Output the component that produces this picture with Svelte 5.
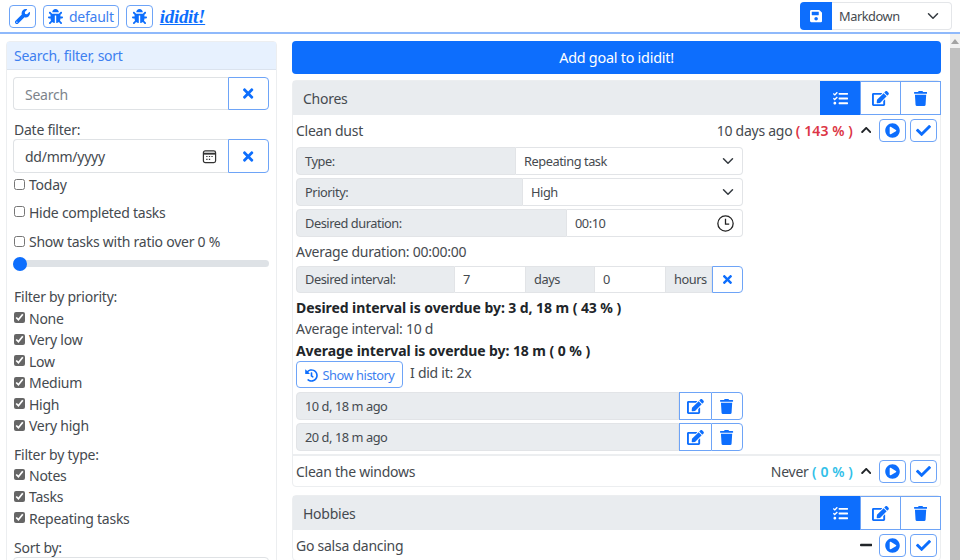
<script>
  const P = {
    wrench: [512, "M507.73 109.1c-2.24-9.03-13.54-12.09-20.12-5.51l-74.36 74.36-67.88-11.31-11.31-67.88 74.36-74.36c6.62-6.62 3.43-17.9-5.66-20.16-47.38-11.74-99.55.91-136.58 37.93-39.64 39.64-50.55 97.1-34.05 147.2L18.74 402.76c-24.99 24.99-24.99 65.51 0 90.5 24.99 24.99 65.51 24.99 90.5 0l213.21-213.21c50.12 16.71 107.47 5.68 147.37-34.22 37.07-37.07 49.7-89.32 37.91-136.73zM64 472c-13.25 0-24-10.75-24-24 0-13.26 10.75-24 24-24s24 10.74 24 24c0 13.25-10.75 24-24 24z"],
    bug: [512, "M511.988 288.9c-.478 17.43-15.217 31.1-32.653 31.1H424v16c0 21.864-4.882 42.584-13.6 61.145l60.228 60.228c12.496 12.497 12.496 32.758 0 45.255-12.498 12.497-32.759 12.496-45.256 0l-54.736-54.736C345.886 467.965 314.351 480 280 480V236c0-6.627-5.373-12-12-12h-24c-6.627 0-12 5.373-12 12v244c-34.351 0-65.886-12.035-90.636-32.108l-54.736 54.736c-12.498 12.497-32.759 12.496-45.256 0-12.496-12.497-12.496-32.758 0-45.255l60.228-60.228C92.882 378.584 88 357.864 88 336v-16H32.666C15.23 320 .491 306.33.013 288.9-.484 270.816 14.028 256 32 256h56v-58.745l-46.628-46.628c-12.496-12.497-12.496-32.758 0-45.255 12.498-12.497 32.758-12.497 45.256 0L141.255 160h229.489l54.627-54.627c12.498-12.497 32.758-12.497 45.256 0 12.496 12.497 12.496 32.758 0 45.255L424 197.255V256h56c17.972 0 32.484 14.816 31.988 32.9zM257 0c-61.856 0-112 50.144-112 112h224C369 50.144 318.856 0 257 0z"],
    save: [448, "M433.941 129.941l-83.882-83.882A48 48 0 0 0 316.118 32H48C21.49 32 0 53.49 0 80v352c0 26.51 21.49 48 48 48h352c26.51 0 48-21.49 48-48V163.882a48 48 0 0 0-14.059-33.941zM224 416c-35.346 0-64-28.654-64-64 0-35.346 28.654-64 64-64s64 28.654 64 64c0 35.346-28.654 64-64 64zm96-304.52V212c0 6.627-5.373 12-12 12H76c-6.627 0-12-5.373-12-12V108c0-6.627 5.373-12 12-12h228.52c3.183 0 6.235 1.264 8.485 3.515l3.48 3.48A11.996 11.996 0 0 1 320 111.48z"],
    times: [352, "M242.72 256l100.07-100.07c12.28-12.28 12.28-32.19 0-44.48l-22.24-22.24c-12.28-12.28-32.19-12.28-44.48 0L176 189.28 75.93 89.21c-12.28-12.28-32.19-12.28-44.48 0L9.21 111.45c-12.28 12.28-12.28 32.19 0 44.48L109.28 256 9.21 356.07c-12.28 12.28-12.28 32.19 0 44.48l22.24 22.24c12.28 12.28 32.2 12.28 44.48 0L176 322.72l100.07 100.07c12.28 12.28 32.2 12.28 44.48 0l22.24-22.24c12.28-12.28 12.28-32.19 0-44.48L242.72 256z"],
    tasks: [512, "M139.61 35.5a12 12 0 0 0-17 0L58.93 98.81l-22.7-22.12a12 12 0 0 0-17 0L3.53 92.41a12 12 0 0 0 0 17l47.59 47.4a12.78 12.78 0 0 0 17.61 0l15.59-15.62L156.52 69a12.09 12.09 0 0 0 .09-17zm0 159.19a12 12 0 0 0-17 0l-63.68 63.72-22.7-22.1a12 12 0 0 0-17 0L3.53 252a12 12 0 0 0 0 17L51 316.5a12.77 12.77 0 0 0 17.6 0l15.7-15.69 72.2-72.22a12 12 0 0 0 .09-16.9zM64 368c-26.49 0-48.59 21.5-48.59 48S37.53 464 64 464a48 48 0 0 0 0-96zm432 16H208a16 16 0 0 0-16 16v32a16 16 0 0 0 16 16h288a16 16 0 0 0 16-16v-32a16 16 0 0 0-16-16zm0-320H208a16 16 0 0 0-16 16v32a16 16 0 0 0 16 16h288a16 16 0 0 0 16-16V80a16 16 0 0 0-16-16zm0 160H208a16 16 0 0 0-16 16v32a16 16 0 0 0 16 16h288a16 16 0 0 0 16-16v-32a16 16 0 0 0-16-16z"],
    edit: [576, "M402.6 83.2l90.2 90.2c3.8 3.8 3.8 10 0 13.8L274.4 405.6l-92.8 10.3c-12.4 1.4-22.9-9.1-21.5-21.5l10.3-92.8L388.8 83.2c3.8-3.8 10-3.8 13.8 0zm162-22.9l-48.8-48.8c-15.2-15.2-39.9-15.2-55.2 0l-35.4 35.4c-3.8 3.8-3.8 10 0 13.8l90.2 90.2c3.8 3.8 10 3.8 13.8 0l35.4-35.4c15.2-15.3 15.2-40 0-55.2zM384 346.2V448H64V128h229.8c3.2 0 6.2-1.3 8.5-3.5l40-40c7.6-7.6 2.2-20.5-8.5-20.5H48C21.5 64 0 85.5 0 112v352c0 26.5 21.5 48 48 48h352c26.5 0 48-21.5 48-48V306.2c0-10.7-12.9-16-20.5-8.5l-40 40c-2.2 2.3-3.5 5.3-3.5 8.5z"],
    trash: [448, "M432 32H312l-9.4-18.7A24 24 0 0 0 281.1 0H166.8a23.72 23.72 0 0 0-21.4 13.3L136 32H16A16 16 0 0 0 0 48v32a16 16 0 0 0 16 16h416a16 16 0 0 0 16-16V48a16 16 0 0 0-16-16zM53.2 467a48 48 0 0 0 47.9 45h245.8a48 48 0 0 0 47.9-45L416 128H32z"],
    play: [512, "M256 8C119 8 8 119 8 256s111 248 248 248 248-111 248-248S393 8 256 8zm115.7 272l-176 101c-15.8 8.8-35.7-2.5-35.7-21V152c0-18.4 19.8-29.8 35.7-21l176 107c16.4 9.2 16.4 32.9 0 42z"],
    check: [512, "M173.898 439.404l-166.4-166.4c-9.997-9.997-9.997-26.206 0-36.204l36.203-36.204c9.997-9.998 26.207-9.998 36.204 0L192 312.69 432.095 72.596c9.997-9.997 26.207-9.997 36.204 0l36.203 36.204c9.997 9.997 9.997 26.206 0 36.204l-294.4 294.401c-9.998 9.997-26.207 9.997-36.204-.001z"],
    up: [448, "M240.971 130.524l194.343 194.343c9.373 9.373 9.373 24.569 0 33.941l-22.667 22.667c-9.357 9.357-24.522 9.375-33.901.04L224 227.495 69.255 381.516c-9.379 9.335-24.544 9.317-33.901-.04l-22.667-22.667c-9.373-9.373-9.373-24.569 0-33.941L207.03 130.525c9.372-9.373 24.568-9.373 33.941-.001z"],
    minus: [448, "M416 208H32c-17.67 0-32 14.33-32 32v32c0 17.67 14.33 32 32 32h384c17.67 0 32-14.33 32-32v-32c0-17.67-14.33-32-32-32z"],
    history: [512, "M504 255.531c.253 136.64-111.18 248.372-247.82 248.468-59.015.042-113.223-20.53-155.822-54.911-11.077-8.94-11.905-25.541-1.839-35.607l11.267-11.267c8.609-8.609 22.353-9.551 31.891-1.984C173.062 425.135 212.781 440 256 440c101.705 0 184-82.311 184-184 0-101.705-82.311-184-184-184-48.814 0-93.149 18.969-126.068 49.932l50.754 50.754c10.08 10.08 2.941 27.314-11.313 27.314H24c-8.837 0-16-7.163-16-16V38.627c0-14.254 17.234-21.393 27.314-11.314l49.372 49.372C129.209 34.136 189.552 8 256 8c136.81 0 247.747 110.78 248 247.531zm-180.912 78.784l9.823-12.63c8.138-10.463 6.253-25.542-4.21-33.679L288 256.349V152c0-13.255-10.745-24-24-24h-16c-13.255 0-24 10.745-24 24v135.651l65.409 50.874c10.463 8.137 25.541 6.253 33.679-4.21z"]
  };
  const priorities = ['None', 'Very low', 'Low', 'Medium', 'High', 'Very high'];
  const types = ['Notes', 'Tasks', 'Repeating tasks'];
  const history = ['10 d, 18 m ago', '20 d, 18 m ago'];
</script>

{#snippet ic(name, h)}
  <svg class="ic" viewBox="0 0 {P[name][0]} 512" height={h} width={h * P[name][0] / 512} fill="currentColor" aria-hidden="true"><path d={P[name][1]} /></svg>
{/snippet}

{#snippet caret()}
  <svg class="caret" viewBox="0 0 16 16" width="12" height="12" fill="none" stroke="#343a40" stroke-width="2" stroke-linecap="round" stroke-linejoin="round" aria-hidden="true"><path d="M2 5l6 6 6-6" /></svg>
{/snippet}

{#snippet headerBtns()}
  <div class="head-btns">
    <button class="hb on">{@render ic('tasks', 15)}</button>
    <button class="hb">{@render ic('edit', 15)}</button>
    <button class="hb">{@render ic('trash', 15)}</button>
  </div>
{/snippet}

{#snippet rowBtns()}
  <button class="btn sq">{@render ic('play', 15)}</button>
  <button class="btn sq chk">{@render ic('check', 15)}</button>
{/snippet}

<div class="page">
  <header class="top">
    <button class="btn tb">{@render ic('wrench', 15)}</button>
    <button class="btn tb">{@render ic('bug', 15)}<span>default</span></button>
    <button class="btn tb">{@render ic('bug', 15)}</button>
    <a class="logo" href="#top">ididit!</a>
    <div class="export">
      <button class="save">{@render ic('save', 14)}</button>
      <div class="sel small-t">Markdown{@render caret()}</div>
    </div>
  </header>

  <div class="body">
    <aside class="side">
      <div class="side-h">Search, filter, sort</div>
      <div class="side-b">
        <div class="group">
          <input class="inp" placeholder="Search" />
          <button class="x">{@render ic('times', 15)}</button>
        </div>
        <div class="lab date-lab">Date filter:</div>
        <div class="group date">
          <div class="inp fake"><span>dd/mm/yyyy</span>
            <svg viewBox="0 0 16 16" width="15" height="15" fill="none" stroke="#333" stroke-width="1.3" aria-hidden="true"><rect x="1.5" y="2" width="13" height="12.5" rx="2" /><path d="M1.5 5h13" stroke-width="2" /><path d="M4.5 8h1.4M7.3 8h1.4M10 8h1.4M4.5 11h1.4M7.3 11h1.4" /></svg>
          </div>
          <button class="x">{@render ic('times', 15)}</button>
        </div>
        <label class="chk-row today"><input type="checkbox" />Today</label>
        <label class="chk-row gap"><input type="checkbox" />Hide completed tasks</label>
        <label class="chk-row gap2"><input type="checkbox" />Show tasks with ratio over 0 %</label>
        <input class="range" type="range" min="0" max="100" value="0" />
        <div class="lab sect">Filter by priority:</div>
        {#each priorities as p}
          <label class="chk-row"><input type="checkbox" checked />{p}</label>
        {/each}
        <div class="lab sect2">Filter by type:</div>
        {#each types as t}
          <label class="chk-row"><input type="checkbox" checked />{t}</label>
        {/each}
        <div class="lab sect3">Sort by:</div>
        <div class="sort"></div>
      </div>
    </aside>

    <main class="main">
      <button class="add">Add goal to ididit!</button>

      <section class="card">
        <div class="card-h"><span>Chores</span>{@render headerBtns()}</div>
        <div class="item open">
          <div class="item-row">
            <span class="name">Clean dust</span>
            <span class="when">10 days ago <b class="red">( 143 % )</b></span>
            <span class="tog">{@render ic('up', 12)}</span>
            {@render rowBtns()}
          </div>
          <div class="detail">
            <div class="fg"><span class="addon w-type">Type:</span><div class="field">Repeating task{@render caret()}</div></div>
            <div class="fg"><span class="addon w-prio">Priority:</span><div class="field">High{@render caret()}</div></div>
            <div class="fg"><span class="addon w-dur">Desired duration:</span><div class="field">00:10
              <svg viewBox="0 0 16 16" width="17" height="17" fill="none" stroke="#222" stroke-width="1.2" aria-hidden="true"><circle cx="8" cy="8" r="7.2" /><path d="M8 3.5V8.5H11.5" /></svg>
            </div></div>
            <div class="txt avg">Average duration: 00:00:00</div>
            <div class="fg interval">
              <span class="addon w-int">Desired interval:</span>
              <span class="num">7</span>
              <span class="addon unit">days</span>
              <span class="num">0</span>
              <span class="addon hours">hours</span>
              <button class="x small">{@render ic('times', 13)}</button>
            </div>
            <div class="txt bold first">Desired interval is overdue by: 3 d, 18 m ( 43 % )</div>
            <div class="txt">Average interval: 10 d</div>
            <div class="txt bold">Average interval is overdue by: 18 m ( 0 % )</div>
            <div class="hist-row">
              <button class="btn show">{@render ic('history', 13)}<span>Show history</span></button>
              <span class="did">I did it: 2x</span>
            </div>
            {#each history as h}
              <div class="fg hist">
                <span class="addon grow">{h}</span>
                <button class="hx">{@render ic('edit', 15)}</button>
                <button class="hx last">{@render ic('trash', 15)}</button>
              </div>
            {/each}
          </div>
        </div>
        <div class="item">
          <div class="item-row">
            <span class="name">Clean the windows</span>
            <span class="when">Never <b class="cyan">( 0 % )</b></span>
            <span class="tog">{@render ic('up', 12)}</span>
            {@render rowBtns()}
          </div>
        </div>
      </section>

      <section class="card hobbies">
        <div class="card-h"><span>Hobbies</span>{@render headerBtns()}</div>
        <div class="item">
          <div class="item-row">
            <span class="name">Go salsa dancing</span>
            <span class="tog minus">{@render ic('minus', 14)}</span>
            {@render rowBtns()}
          </div>
        </div>
      </section>
    </main>

    <div class="sb"><svg viewBox="0 0 10 6" width="8" height="5" aria-hidden="true"><path d="M5 0l5 6H0z" fill="#a3a3a3" /></svg><div class="thumb"></div></div>
  </div>
</div>

<style>
  :global(body) { margin: 0; background: #fff; overflow: hidden; }
  .page { width: 960px; height: 560px; overflow: hidden; font: 14px/21px "Noto Sans", sans-serif; letter-spacing: -0.25px; color: #454a4f; }
  button { font: inherit; letter-spacing: inherit; padding: 0; cursor: pointer; background: #fff; color: #0d6efd; }
  .ic { display: block; flex: none; }

  .top { height: 34px; box-sizing: border-box; display: flex; align-items: center; gap: 7px; padding: 0 8px 0 9px; border-bottom: 2px solid #8fb9fb; }
  .btn { display: flex; align-items: center; justify-content: center; gap: 6px; border: 1px solid #6ea4f7; border-radius: 4px; color: #3d7ff0; }
  .tb { height: 23px; min-width: 27px; padding: 0 4px; box-sizing: border-box; }
  .tb .ic { color: #0d6efd; }
  .logo { font: italic 700 19px/20px "Liberation Serif", serif; letter-spacing: -0.3px; color: #0d6efd; text-decoration: underline; margin-top: 1px; }
  .export { margin-left: auto; display: flex; height: 28px; }
  .save { width: 32px; border: 0; border-radius: 4px 0 0 4px; background: #0d6efd; color: #fff; display: flex; align-items: center; justify-content: center; }
  .sel { width: 120px; box-sizing: border-box; display: flex; align-items: center; justify-content: space-between; padding: 0 12px 0 7px; border: 1px solid #e4e6e9; border-left: 0; border-radius: 0 4px 4px 0; }
  .small-t { font-size: 12.8px; letter-spacing: -0.45px; }

  .body { display: flex; height: 526px; }
  .side { width: 271px; height: 700px; flex: none; margin: 7px 0 0 6px; box-sizing: border-box; border: 1px solid #eceef0; border-radius: 4px; }
  .side-h { height: 27px; line-height: 28px; padding: 0 7px; background: #e7f1fe; color: #3d7ff0; border-bottom: 1px solid #dbe3ee; }
  .side-b { padding: 7px 7px 7px 6px; display: flex; flex-direction: column; }
  .group { display: flex; height: 33px; }
  .group.date { height: 34px; }
  .inp { flex: 1; min-width: 0; box-sizing: border-box; border: 1px solid #dfe2e5; border-right: 0; border-radius: 4px 0 0 4px; padding: 2px 11px 0; font: inherit; letter-spacing: inherit; color: #454a4f; outline: none; }
  .inp::placeholder { color: #7d848b; }
  .fake { display: flex; align-items: center; justify-content: space-between; padding: 0 11px; }
  .x { width: 41px; flex: none; display: flex; align-items: center; justify-content: center; border: 1px solid #6ea4f7; border-radius: 0 4px 4px 0; }
  .date-lab { margin-top: 11px; line-height: 18px; }
  .lab { color: #454a4f; padding-left: 1px; }
  .chk-row { display: flex; align-items: center; gap: 4px; height: 21.5px; flex: none; }
  .chk-row input { width: 11px; height: 11px; margin: 0 0 1px 1px; flex: none; accent-color: #666; }
  .today { margin-top: 1px; }
  .gap { margin-top: 6px; }
  .gap2 { margin-top: 8px; }
  .range { appearance: none; -webkit-appearance: none; display: block; width: 256px; height: 14px; margin: 4px 0 0; background: transparent; }
  .range::-webkit-slider-runnable-track { height: 7px; border-radius: 4px; background: #dee2e6; }
  .range::-webkit-slider-thumb { -webkit-appearance: none; width: 14px; height: 14px; margin-top: -3.5px; border-radius: 50%; background: #0d6efd; }
  .sect { margin-top: 15px; margin-bottom: 1px; }
  .sect2 { margin-top: 7px; }
  .sect3 { margin-top: 8px; }
  .sort { height: 34px; border: 1px solid #dfe2e5; border-radius: 4px; margin-top: -1px; }

  .main { width: 649px; flex: none; margin: 7px 0 0 15px; }
  .add { display: block; width: 100%; height: 33px; border: 0; border-radius: 4px; background: #0d6efd; color: #fff; font-size: 14.4px; }
  .card { margin-top: 6px; border: 1px solid #eceef0; border-radius: 4px; }
  .card.hobbies { margin-top: 8px; }
  .card-h { display: flex; justify-content: space-between; align-items: center; height: 34px; padding-left: 10px; background: #e9ecef; }
  .head-btns { display: flex; height: 34px; margin-right: -1px; }
  .hb { width: 41px; margin-left: -1px; display: flex; align-items: center; justify-content: center; border: 1px solid #6ea4f7; color: #0d6efd; }
  .hb.on { background: #0d6efd; color: #fff; border-color: #0d6efd; }
  .item { padding: 0 3px; }
  .item + .item { border-top: 2px solid #eceef0; }
  .item-row { display: flex; align-items: center; height: 30px; }
  .name { flex: 1; }
  .when { margin-right: 7px; }
  .when b { font-weight: 600; letter-spacing: 0.1px; }
  .red { color: #dc3545; }
  .cyan { color: #31c0e8; }
  .tog { width: 12px; display: flex; justify-content: center; color: #212529; margin-right: 7px; }
  .tog.minus { width: 14px; margin-right: 6px; }
  .sq { width: 27px; height: 23px; box-sizing: border-box; }
  .sq.chk { margin-left: 4px; }
  .sq .ic { color: #0d6efd; }

  .detail { width: 447px; margin-top: 2px; display: flex; flex-direction: column; }
  .fg { display: flex; height: 28px; margin-bottom: 3px; border-radius: 4px; box-sizing: border-box; font-size: 12.8px; letter-spacing: -0.45px; }
  .addon { display: flex; align-items: center; box-sizing: border-box; background: #e9ecef; padding-left: 8px; border: 1px solid #e2e4e7; flex: none; color: #454a4f; }
  .fg > .addon:first-child { border-radius: 4px 0 0 4px; }
  .w-type { width: 220px; } .w-prio { width: 227px; } .w-dur { width: 271px; } .w-int { width: 159px; }
  .field { flex: 1; display: flex; justify-content: space-between; align-items: center; box-sizing: border-box; padding: 0 8px; border: 1px solid #e2e4e7; border-left: 0; border-radius: 0 4px 4px 0; }
  .txt { height: 21.5px; line-height: 21.5px; }
  .txt.bold { font-weight: 700; color: #212529; letter-spacing: -0.07px; }
  .avg { margin-top: 1px; margin-bottom: 3px; }
  .interval { height: 27px; margin-bottom: 0; }
  .num { width: 70px; display: flex; align-items: center; padding-left: 8px; box-sizing: border-box; border-top: 1px solid #e2e4e7; border-bottom: 1px solid #e2e4e7; flex: none; }
  .unit { width: 70px; }
  .hours { width: 47px; }
  .x.small { width: 31px; }
  .first { margin-top: 4px; }
  .hist-row { display: flex; gap: 7px; margin-bottom: 4px; }
  .show { width: 107px; height: 27px; box-sizing: border-box; gap: 5px; padding-top: 1px; font-size: 12.8px; letter-spacing: -0.45px; }
  .show .ic { color: #0d6efd; }
  .did { margin-top: 1px; }
  .hist { height: 28px; margin-bottom: 3px; }
  .grow { flex: 1; }
  .hx { width: 32px; display: flex; align-items: center; justify-content: center; border: 1px solid #6ea4f7; border-right: 0; flex: none; }
  .hx.last { border-right: 1px solid #6ea4f7; border-radius: 0 4px 4px 0; }

  .sb { width: 10px; margin-left: 9px; flex: none; background: #f1f1f1; display: flex; flex-direction: column; align-items: center; padding-top: 5px; box-sizing: border-box; }
  .thumb { width: 100%; flex: 1; margin-top: 4px; background: #c1c1c1; }
</style>
